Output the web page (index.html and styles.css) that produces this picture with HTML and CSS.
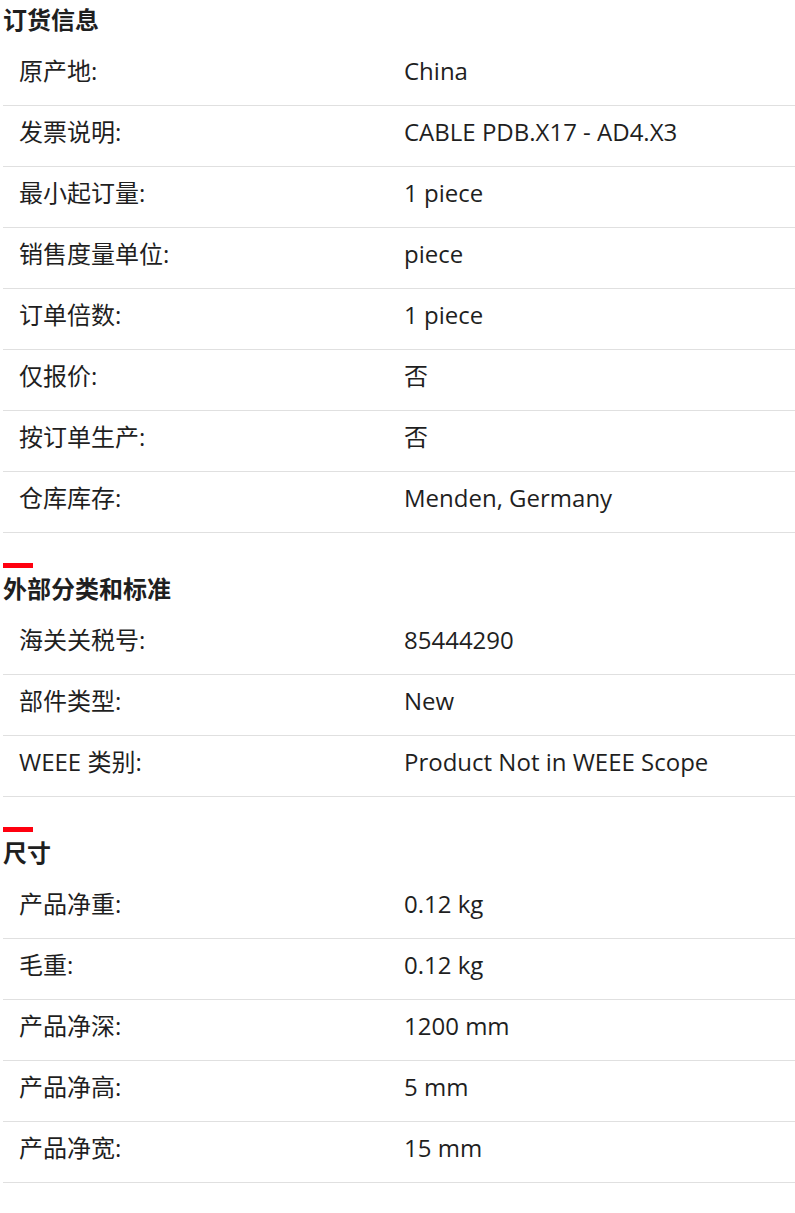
FILE: index.html
```html
<!DOCTYPE html>
<html lang="zh">
<head>
<meta charset="utf-8">
<link rel="stylesheet" href="styles.css">
</head>
<body>
<div class="page">
  <section class="section first">
    <h2 class="heading">订货信息</h2>
    <div class="row"><div class="label">原产地:</div><div class="value">China</div></div>
    <div class="row"><div class="label">发票说明:</div><div class="value">CABLE PDB.X17 - AD4.X3</div></div>
    <div class="row"><div class="label">最小起订量:</div><div class="value">1 piece</div></div>
    <div class="row"><div class="label">销售度量单位:</div><div class="value">piece</div></div>
    <div class="row"><div class="label">订单倍数:</div><div class="value">1 piece</div></div>
    <div class="row"><div class="label">仅报价:</div><div class="value">否</div></div>
    <div class="row"><div class="label">按订单生产:</div><div class="value">否</div></div>
    <div class="row"><div class="label">仓库库存:</div><div class="value">Menden, Germany</div></div>
  </section>
  <section class="section">
    <div class="bar"></div>
    <h2 class="heading">外部分类和标准</h2>
    <div class="row"><div class="label">海关关税号:</div><div class="value">85444290</div></div>
    <div class="row"><div class="label">部件类型:</div><div class="value">New</div></div>
    <div class="row"><div class="label">WEEE 类别:</div><div class="value">Product Not in WEEE Scope</div></div>
  </section>
  <section class="section">
    <div class="bar"></div>
    <h2 class="heading">尺寸</h2>
    <div class="row"><div class="label">产品净重:</div><div class="value">0.12 kg</div></div>
    <div class="row"><div class="label">毛重:</div><div class="value">0.12 kg</div></div>
    <div class="row"><div class="label">产品净深:</div><div class="value">1200 mm</div></div>
    <div class="row"><div class="label">产品净高:</div><div class="value">5 mm</div></div>
    <div class="row"><div class="label">产品净宽:</div><div class="value">15 mm</div></div>
  </section>
</div>
</body>
</html>
```

FILE: styles.css
```css
html, body {
  margin: 0;
  padding: 0;
  background: #ffffff;
}

body {
  font-family: "Open Sans", "Noto Sans CJK SC", sans-serif;
  color: #1f1f1f;
  font-size: 24px;
}

.page {
  padding: 0 0 29px 3px;
}

.section {
  display: flex;
  flex-direction: column;
  margin-top: 30px;
}

.section.first {
  margin-top: 0;
  padding-top: 2px;
}

.bar {
  width: 30px;
  height: 5px;
  background: #ff000f;
  margin-bottom: 3px;
}

.heading {
  margin: 0 0 7px 0;
  font-size: 24px;
  font-weight: 700;
  line-height: 36px;
  color: #1f1f1f;
}

.row {
  display: grid;
  grid-template-columns: 385px 1fr;
  padding: 8px 0 16px 16px;
  line-height: 36px;
  border-bottom: 1px solid #e0e0e0;
}

.label,
.value {
  white-space: nowrap;
}
```
